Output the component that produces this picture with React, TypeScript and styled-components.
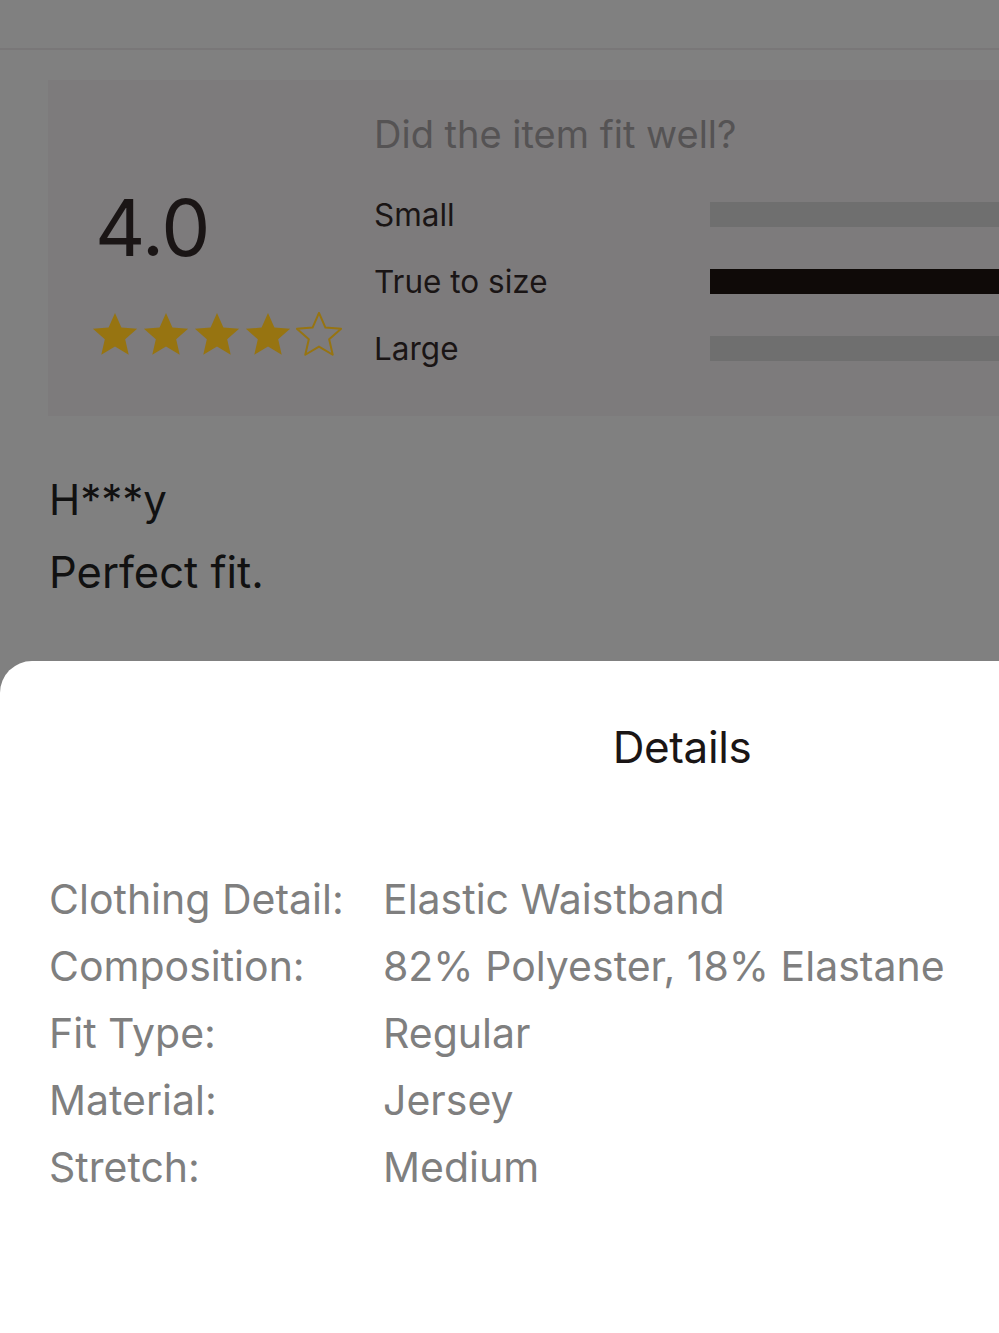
import React from "react";
import styled, { createGlobalStyle } from "styled-components";

const GlobalStyle = createGlobalStyle`
  html, body {
    margin: 0;
    padding: 0;
    overflow: hidden;
    background: #808080;
  }
  body {
    font-family: Inter, "Noto Sans", sans-serif;
  }
`;

const Page = styled.div`
  width: 100%;
  height: 1333px;
  background: #808080;
  display: flex;
  flex-direction: column;
  overflow: hidden;
`;

const TopBar = styled.div`
  height: 48px;
  flex-shrink: 0;
  border-bottom: 2px solid #797778;
`;

const RatingCard = styled.section`
  margin: 30px 0 0 48px;
  height: 336px;
  flex-shrink: 0;
  background: #7d7b7c;
  display: flex;
`;

const ScoreCol = styled.div`
  width: 326px;
  display: flex;
  flex-direction: column;
  padding: 108px 0 0 44px;
  box-sizing: border-box;
`;

const Score = styled.div`
  font-size: 78px;
  line-height: 80px;
  height: 80px;
  padding-left: 3px;
  color: #1a1515;
  letter-spacing: -1px;
`;

const Stars = styled.div`
  display: flex;
  gap: 5px;
  margin-top: 44px;
`;

const FitCol = styled.div`
  flex: 1;
  display: flex;
  flex-direction: column;
  padding-top: 32px;
`;

const FitTitle = styled.div`
  font-size: 38px;
  line-height: 44px;
  color: #555354;
  margin-bottom: 25px;
`;

const FitRow = styled.div`
  display: flex;
  align-items: center;
  height: 67px;
`;

const FitLabel = styled.div`
  width: 336px;
  font-size: 31.5px;
  color: #1a1515;
`;

const Bar = styled.div<{ $active: boolean }>`
  flex: 1;
  height: 25px;
  background: ${(p) => (p.$active ? "#0f0a08" : "#6f6f6f")};
`;

const Review = styled.div`
  padding: 52px 49px 0;
  color: #111;
`;

const Reviewer = styled.div`
  font-size: 42px;
  line-height: 64px;
`;

const ReviewText = styled.div`
  font-size: 43.5px;
  line-height: 80px;
`;

const Sheet = styled.section`
  margin-top: auto;
  height: 672px;
  flex-shrink: 0;
  background: #ffffff;
  border-radius: 32px 0 0 0;
  display: flex;
  flex-direction: column;
`;

const SheetTitle = styled.h2`
  margin: 0;
  padding: 61px 0 0 365px;
  text-align: center;
  font-size: 44px;
  line-height: 50px;
  font-weight: 400;
  color: #1a1515;
  letter-spacing: -0.4px;
`;

const DetailList = styled.div`
  padding: 93px 49px 0;
  display: flex;
  flex-direction: column;
`;

const DetailRow = styled.div`
  display: flex;
  height: 67px;
  align-items: center;
  font-size: 41px;
  color: #7f7f7f;
`;

const DetailLabel = styled.div`
  width: 334px;
`;

const Star = ({ filled }: { filled: boolean }) => (
  <svg width="46" height="45" viewBox="1.6 1.8 20.8 20.3">
    <path
      d="M12 2.2l2.9 6.6 7.1.6-5.4 4.7 1.6 7-6.2-3.7-6.2 3.7 1.6-7L2 9.4l7.1-.6z"
      fill={filled ? "#977411" : "none"}
      stroke="#977411"
      strokeWidth={filled ? 0 : 0.9}
      strokeLinejoin="round"
    />
  </svg>
);

const fits = [
  { label: "Small", active: false },
  { label: "True to size", active: true },
  { label: "Large", active: false },
];

const details = [
  ["Clothing Detail:", "Elastic Waistband"],
  ["Composition:", "82% Polyester, 18% Elastane"],
  ["Fit Type:", "Regular"],
  ["Material:", "Jersey"],
  ["Stretch:", "Medium"],
];

export default function App() {
  return (
    <>
      <GlobalStyle />
      <Page>
        <TopBar />
        <RatingCard>
          <ScoreCol>
            <Score>4.0</Score>
            <Stars>
              {[1, 2, 3, 4, 5].map((n) => (
                <Star key={n} filled={n <= 4} />
              ))}
            </Stars>
          </ScoreCol>
          <FitCol>
            <FitTitle>Did the item fit well?</FitTitle>
            {fits.map((f) => (
              <FitRow key={f.label}>
                <FitLabel>{f.label}</FitLabel>
                <Bar $active={f.active} />
              </FitRow>
            ))}
          </FitCol>
        </RatingCard>
        <Review>
          <Reviewer>H***y</Reviewer>
          <ReviewText>Perfect fit.</ReviewText>
        </Review>
        <Sheet>
          <SheetTitle>Details</SheetTitle>
          <DetailList>
            {details.map(([k, v]) => (
              <DetailRow key={k}>
                <DetailLabel>{k}</DetailLabel>
                <div>{v}</div>
              </DetailRow>
            ))}
          </DetailList>
        </Sheet>
      </Page>
    </>
  );
}
